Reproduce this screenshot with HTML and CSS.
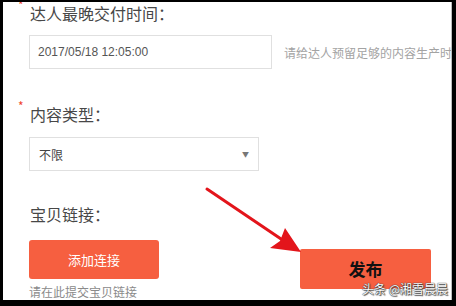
FILE: index.html
```html
<!DOCTYPE html>
<html lang="zh">
<head>
<meta charset="utf-8">
<link rel="stylesheet" href="styles.css">
</head>
<body>
<div class="frame">
  <div class="field field-time">
    <div class="label"><span class="star">*</span><span>达人最晚交付时间：</span></div>
    <div class="input-row">
      <div class="input">2017/05/18 12:05:00</div>
      <div class="hint">请给达人预留足够的内容生产时间</div>
    </div>
  </div>
  <div class="field field-type">
    <div class="label"><span class="star">*</span><span>内容类型：</span></div>
    <div class="select"><span>不限</span><span class="caret">▼</span></div>
  </div>
  <div class="bottom-row">
    <div class="field field-link">
      <div class="label"><span class="star blank"></span><span>宝贝链接：</span></div>
      <div class="add-btn">添加连接</div>
      <div class="sub-hint">请在此提交宝贝链接</div>
    </div>
    <div class="publish">发布</div>
  </div>
  <svg class="arrow" width="120" height="90" viewBox="0 0 120 90">
    <line x1="4" y1="4" x2="84" y2="58" stroke="#e3151b" stroke-width="3" stroke-linecap="round"/>
    <polygon points="98,67 67,63 77,56 82,43" fill="#e3151b"/>
  </svg>
  <div class="watermark">头条 @湘雪晨晨</div>
</div>
</body>
</html>
```

FILE: styles.css
```css
html, body {
  margin: 0;
  padding: 0;
  background: #000;
  width: 456px;
  height: 306px;
  overflow: hidden;
}
.frame {
  position: relative;
  margin: 2px 0 0 3px;
  width: 448px;
  height: 298px;
  background: #fff;
  border-right: 1px solid #bdbdbd;
  overflow: hidden;
  font-family: "Liberation Sans", "Noto Sans CJK SC", sans-serif;
  color: #333;
}
.field-time {
  padding-top: 1px;
}
.label {
  display: flex;
  align-items: flex-start;
  padding-left: 15px;
  height: 20px;
  line-height: 20px;
  font-size: 16px;
  font-family: "Noto Sans CJK SC", sans-serif;
  color: #474747;
}
.star {
  width: 12px;
  font-size: 12px;
  line-height: 10px;
  margin-top: -3px;
  color: #f0442c;
}
.input-row {
  display: flex;
  align-items: center;
  margin-top: 12px;
  margin-left: 26px;
  gap: 12px;
}
.input {
  box-sizing: border-box;
  width: 243px;
  height: 34px;
  flex: none;
  border: 1px solid #e0e0e0;
  padding-left: 8px;
  line-height: 32px;
  font-size: 12px;
  color: #555;
}
.hint {
  white-space: nowrap;
  font-size: 12px;
  color: #a3a3a3;
  font-family: "Noto Sans CJK SC", sans-serif;
}
.field-type {
  margin-top: 35px;
}
.select {
  box-sizing: border-box;
  display: flex;
  justify-content: space-between;
  align-items: center;
  width: 230px;
  height: 34px;
  margin-top: 13px;
  margin-left: 26px;
  border: 1px solid #e0e0e0;
  padding: 0 9px 0 9px;
  font-size: 12px;
  color: #444;
  font-family: "Noto Sans CJK SC", sans-serif;
}
.caret {
  font-size: 7px;
  color: #777;
}
.bottom-row {
  display: flex;
  align-items: flex-start;
  margin-top: 33px;
}
.field-link {
  width: 297px;
  flex: none;
}
.add-btn {
  box-sizing: border-box;
  width: 130px;
  height: 39px;
  margin-top: 16px;
  margin-left: 26px;
  background: #f65f40;
  border-radius: 3px;
  color: #fff;
  font-size: 13px;
  line-height: 39px;
  text-align: center;
  font-family: "Noto Sans CJK SC", sans-serif;
}
.sub-hint {
  margin-top: 5px;
  margin-left: 26px;
  font-size: 12px;
  line-height: 16px;
  color: #8a8a8a;
  font-family: "Noto Sans CJK SC", sans-serif;
}
.publish {
  width: 131px;
  height: 40px;
  margin-top: 45px;
  background: #f65f40;
  border-radius: 2px;
  color: #111;
  font-size: 17px;
  font-weight: 700;
  line-height: 40px;
  text-align: center;
  font-family: "Noto Sans CJK SC", sans-serif;
}
.arrow {
  position: absolute;
  left: 200px;
  top: 183px;
}
.watermark {
  position: absolute;
  right: 3px;
  bottom: 4px;
  font-size: 12px;
  line-height: 14px;
  color: #fff;
  font-family: "Noto Sans CJK SC", sans-serif;
  text-shadow: 0 0 1px #333, 0 0 1px #333, 1px 1px 1px #444;
}
```
